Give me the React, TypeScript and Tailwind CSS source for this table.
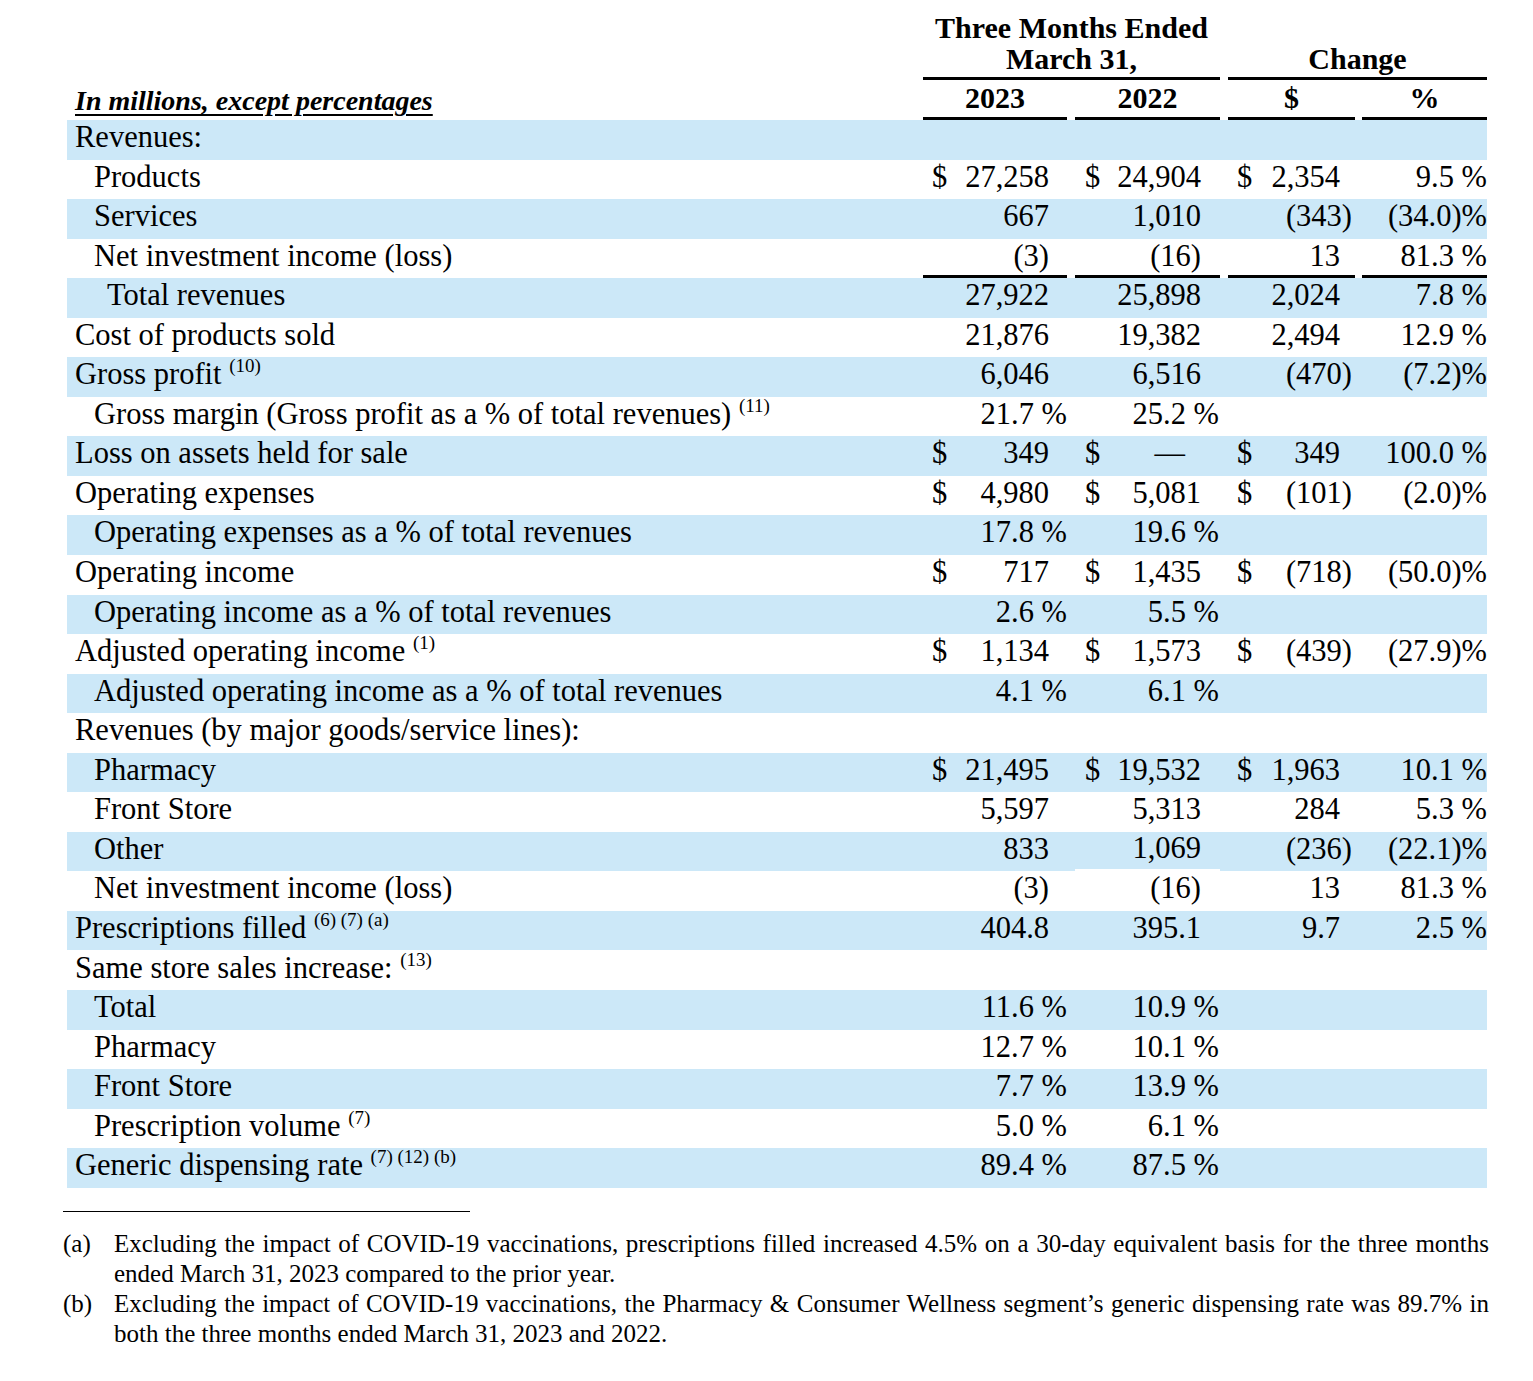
type Row = {
  label: string;
  sup?: string;
  level: 0 | 1 | 2;
  blue?: boolean;
  a?: string;
  b?: string;
  c?: string;
  d?: string;
  dollar?: boolean;
  rule?: boolean;
};

const ROWS: Row[] = [
  { label: 'Revenues:', level: 0, blue: true },
  { label: 'Products', level: 1, a: '27,258', b: '24,904', c: '2,354', d: '9.5 %', dollar: true },
  { label: 'Services', level: 1, blue: true, a: '667', b: '1,010', c: '(343)', d: '(34.0)%' },
  { label: 'Net investment income (loss)', level: 1, a: '(3)', b: '(16)', c: '13', d: '81.3 %', rule: true },
  { label: 'Total revenues', level: 2, blue: true, a: '27,922', b: '25,898', c: '2,024', d: '7.8 %' },
  { label: 'Cost of products sold', level: 0, a: '21,876', b: '19,382', c: '2,494', d: '12.9 %' },
  { label: 'Gross profit', sup: '(10)', level: 0, blue: true, a: '6,046', b: '6,516', c: '(470)', d: '(7.2)%' },
  { label: 'Gross margin (Gross profit as a % of total revenues)', sup: '(11)', level: 1, a: '21.7 %', b: '25.2 %' },
  { label: 'Loss on assets held for sale', level: 0, blue: true, a: '349', b: '—', c: '349', d: '100.0 %', dollar: true },
  { label: 'Operating expenses', level: 0, a: '4,980', b: '5,081', c: '(101)', d: '(2.0)%', dollar: true },
  { label: 'Operating expenses as a % of total revenues', level: 1, blue: true, a: '17.8 %', b: '19.6 %' },
  { label: 'Operating income', level: 0, a: '717', b: '1,435', c: '(718)', d: '(50.0)%', dollar: true },
  { label: 'Operating income as a % of total revenues', level: 1, blue: true, a: '2.6 %', b: '5.5 %' },
  { label: 'Adjusted operating income', sup: '(1)', level: 0, a: '1,134', b: '1,573', c: '(439)', d: '(27.9)%', dollar: true },
  { label: 'Adjusted operating income as a % of total revenues', level: 1, blue: true, a: '4.1 %', b: '6.1 %' },
  { label: 'Revenues (by major goods/service lines):', level: 0 },
  { label: 'Pharmacy', level: 1, blue: true, a: '21,495', b: '19,532', c: '1,963', d: '10.1 %', dollar: true },
  { label: 'Front Store', level: 1, a: '5,597', b: '5,313', c: '284', d: '5.3 %' },
  { label: 'Other', level: 1, blue: true, a: '833', b: '1,069', c: '(236)', d: '(22.1)%' },
  { label: 'Net investment income (loss)', level: 1, a: '(3)', b: '(16)', c: '13', d: '81.3 %' },
  { label: 'Prescriptions filled', sup: '(6) (7) (a)', level: 0, blue: true, a: '404.8', b: '395.1', c: '9.7', d: '2.5 %' },
  { label: 'Same store sales increase:', sup: '(13)', level: 0 },
  { label: 'Total', level: 1, blue: true, a: '11.6 %', b: '10.9 %' },
  { label: 'Pharmacy', level: 1, a: '12.7 %', b: '10.1 %' },
  { label: 'Front Store', level: 1, blue: true, a: '7.7 %', b: '13.9 %' },
  { label: 'Prescription volume', sup: '(7)', level: 1, a: '5.0 %', b: '6.1 %' },
  { label: 'Generic dispensing rate', sup: '(7) (12) (b)', level: 0, blue: true, a: '89.4 %', b: '87.5 %' },
];

const isPct = (v?: string) => !!v && v.endsWith('%');

function Dollar({ show }: { show?: boolean }) {
  return <span className="shrink-0">{show ? '$' : ''}</span>;
}

export default function App() {
  return (
    <div className="w-[1533px] h-[1381px] bg-white text-black font-['Liberation_Serif',serif]">
      <div className="ml-[67px] w-[1420px]">
        {/* Header: period + change groups */}
        <div className="flex h-[80px]">
          <div className="w-[852px]" />
          <div className="w-[305px] px-[4px] flex">
            <div className="flex-1 flex flex-col justify-end border-b-[3px] border-black pb-[3px] text-center text-[30px] font-bold leading-[31px]">
              <span>Three Months Ended</span>
              <span>March 31,</span>
            </div>
          </div>
          <div className="w-[263px] pl-[4px] flex">
            <div className="flex-1 flex flex-col justify-end border-b-[3px] border-black pb-[3px] text-center text-[30px] font-bold leading-[31px]">
              <span>Change</span>
            </div>
          </div>
        </div>

        {/* Header: column years */}
        <div className="flex h-[40px] text-[30px] font-bold leading-[31px]">
          <div className="w-[852px] flex items-end pl-[8px] pb-[4px]">
            <span className="text-[28px] italic underline underline-offset-[4px] decoration-[1.5px]">
              In millions, except percentages
            </span>
          </div>
          <div className="w-[152px] px-[4px] flex">
            <div className="flex-1 border-b-[3px] border-black pt-[2px] text-center">2023</div>
          </div>
          <div className="w-[153px] px-[4px] flex">
            <div className="flex-1 border-b-[3px] border-black pt-[2px] text-center">2022</div>
          </div>
          <div className="w-[135px] px-[4px] flex">
            <div className="flex-1 border-b-[3px] border-black pt-[2px] text-center">$</div>
          </div>
          <div className="w-[128px] pl-[3px] flex">
            <div className="flex-1 border-b-[3px] border-black pt-[2px] text-center">%</div>
          </div>
        </div>

        {/* Body rows */}
        {ROWS.map((r, i) => (
          <div
            key={i}
            className={`flex h-[39.56px] text-[30.5px] leading-none ${r.blue ? 'bg-[#cce8f8]' : 'bg-white'}`}
          >
            <div
              className={`w-[852px] flex items-center pb-[5px] whitespace-nowrap ${
                r.level === 0 ? 'pl-[8px]' : r.level === 1 ? 'pl-[27px]' : 'pl-[40px]'
              }`}
            >
              <span>
                {r.label}
                {r.sup && (
                  <>
                    {' '}
                    <sup className="text-[19px] top-[-12px]">{r.sup}</sup>
                  </>
                )}
              </span>
            </div>

            {/* 2023 */}
            <div className="w-[152px] px-[4px] flex">
              <div
                className={`flex-1 flex items-center pl-[9px] ${isPct(r.a) ? 'pr-0' : 'pr-[18px]'} ${
                  r.rule ? 'border-b-[3px] border-black pb-[2px]' : 'pb-[5px]'
                }`}
              >
                <Dollar show={r.dollar} />
                <span className="flex-1 text-right">{r.a}</span>
              </div>
            </div>

            {/* 2022 */}
            <div className="w-[153px] px-[4px] flex">
              <div
                className={`flex-1 flex items-center pl-[10px] ${
                  isPct(r.b) ? 'pr-[1px]' : r.b === '—' ? 'pr-[35px]' : 'pr-[19px]'
                } ${r.rule ? 'border-b-[3px] border-black pb-[2px]' : 'pb-[5px]'} ${
                  r.label === 'Other' ? 'border-b-2 border-white' : ''
                }`}
              >
                <Dollar show={r.dollar} />
                <span className="flex-1 text-right">{r.b}</span>
              </div>
            </div>

            {/* Change $ */}
            <div className="w-[135px] px-[4px] flex">
              <div
                className={`flex-1 flex items-center pl-[9px] ${
                  r.c && r.c.startsWith('(') ? 'pr-[3px]' : 'pr-[15px]'
                } ${r.rule ? 'border-b-[3px] border-black pb-[2px]' : 'pb-[5px]'}`}
              >
                <Dollar show={r.dollar} />
                <span className="flex-1 text-right">{r.c}</span>
              </div>
            </div>

            {/* Change % */}
            <div className="w-[128px] pl-[3px] flex">
              <div
                className={`flex-1 flex items-center justify-end ${
                  r.rule ? 'border-b-[3px] border-black pb-[2px]' : 'pb-[5px]'
                }`}
              >
                <span>{r.d}</span>
              </div>
            </div>
          </div>
        ))}
      </div>

      {/* Footnotes */}
      <div className="ml-[63px] mt-[23px] w-[407px] h-px bg-black" />
      <div className="ml-[63px] mt-[17px] w-[1426px] text-[25px] leading-[30px]">
        <div className="flex">
          <span className="w-[51px] shrink-0">(a)</span>
          <div className="flex-1">
            <div className="whitespace-nowrap text-justify [text-align-last:justify]">
              Excluding the impact of COVID-19 vaccinations, prescriptions filled increased 4.5% on a 30-day equivalent basis for the three months
            </div>
            <div>ended March 31, 2023 compared to the prior year.</div>
          </div>
        </div>
        <div className="flex">
          <span className="w-[51px] shrink-0">(b)</span>
          <div className="flex-1">
            <div className="whitespace-nowrap text-justify [text-align-last:justify]">
              Excluding the impact of COVID-19 vaccinations, the Pharmacy &amp; Consumer Wellness segment’s generic dispensing rate was 89.7% in
            </div>
            <div>both the three months ended March 31, 2023 and 2022.</div>
          </div>
        </div>
      </div>
    </div>
  );
}
